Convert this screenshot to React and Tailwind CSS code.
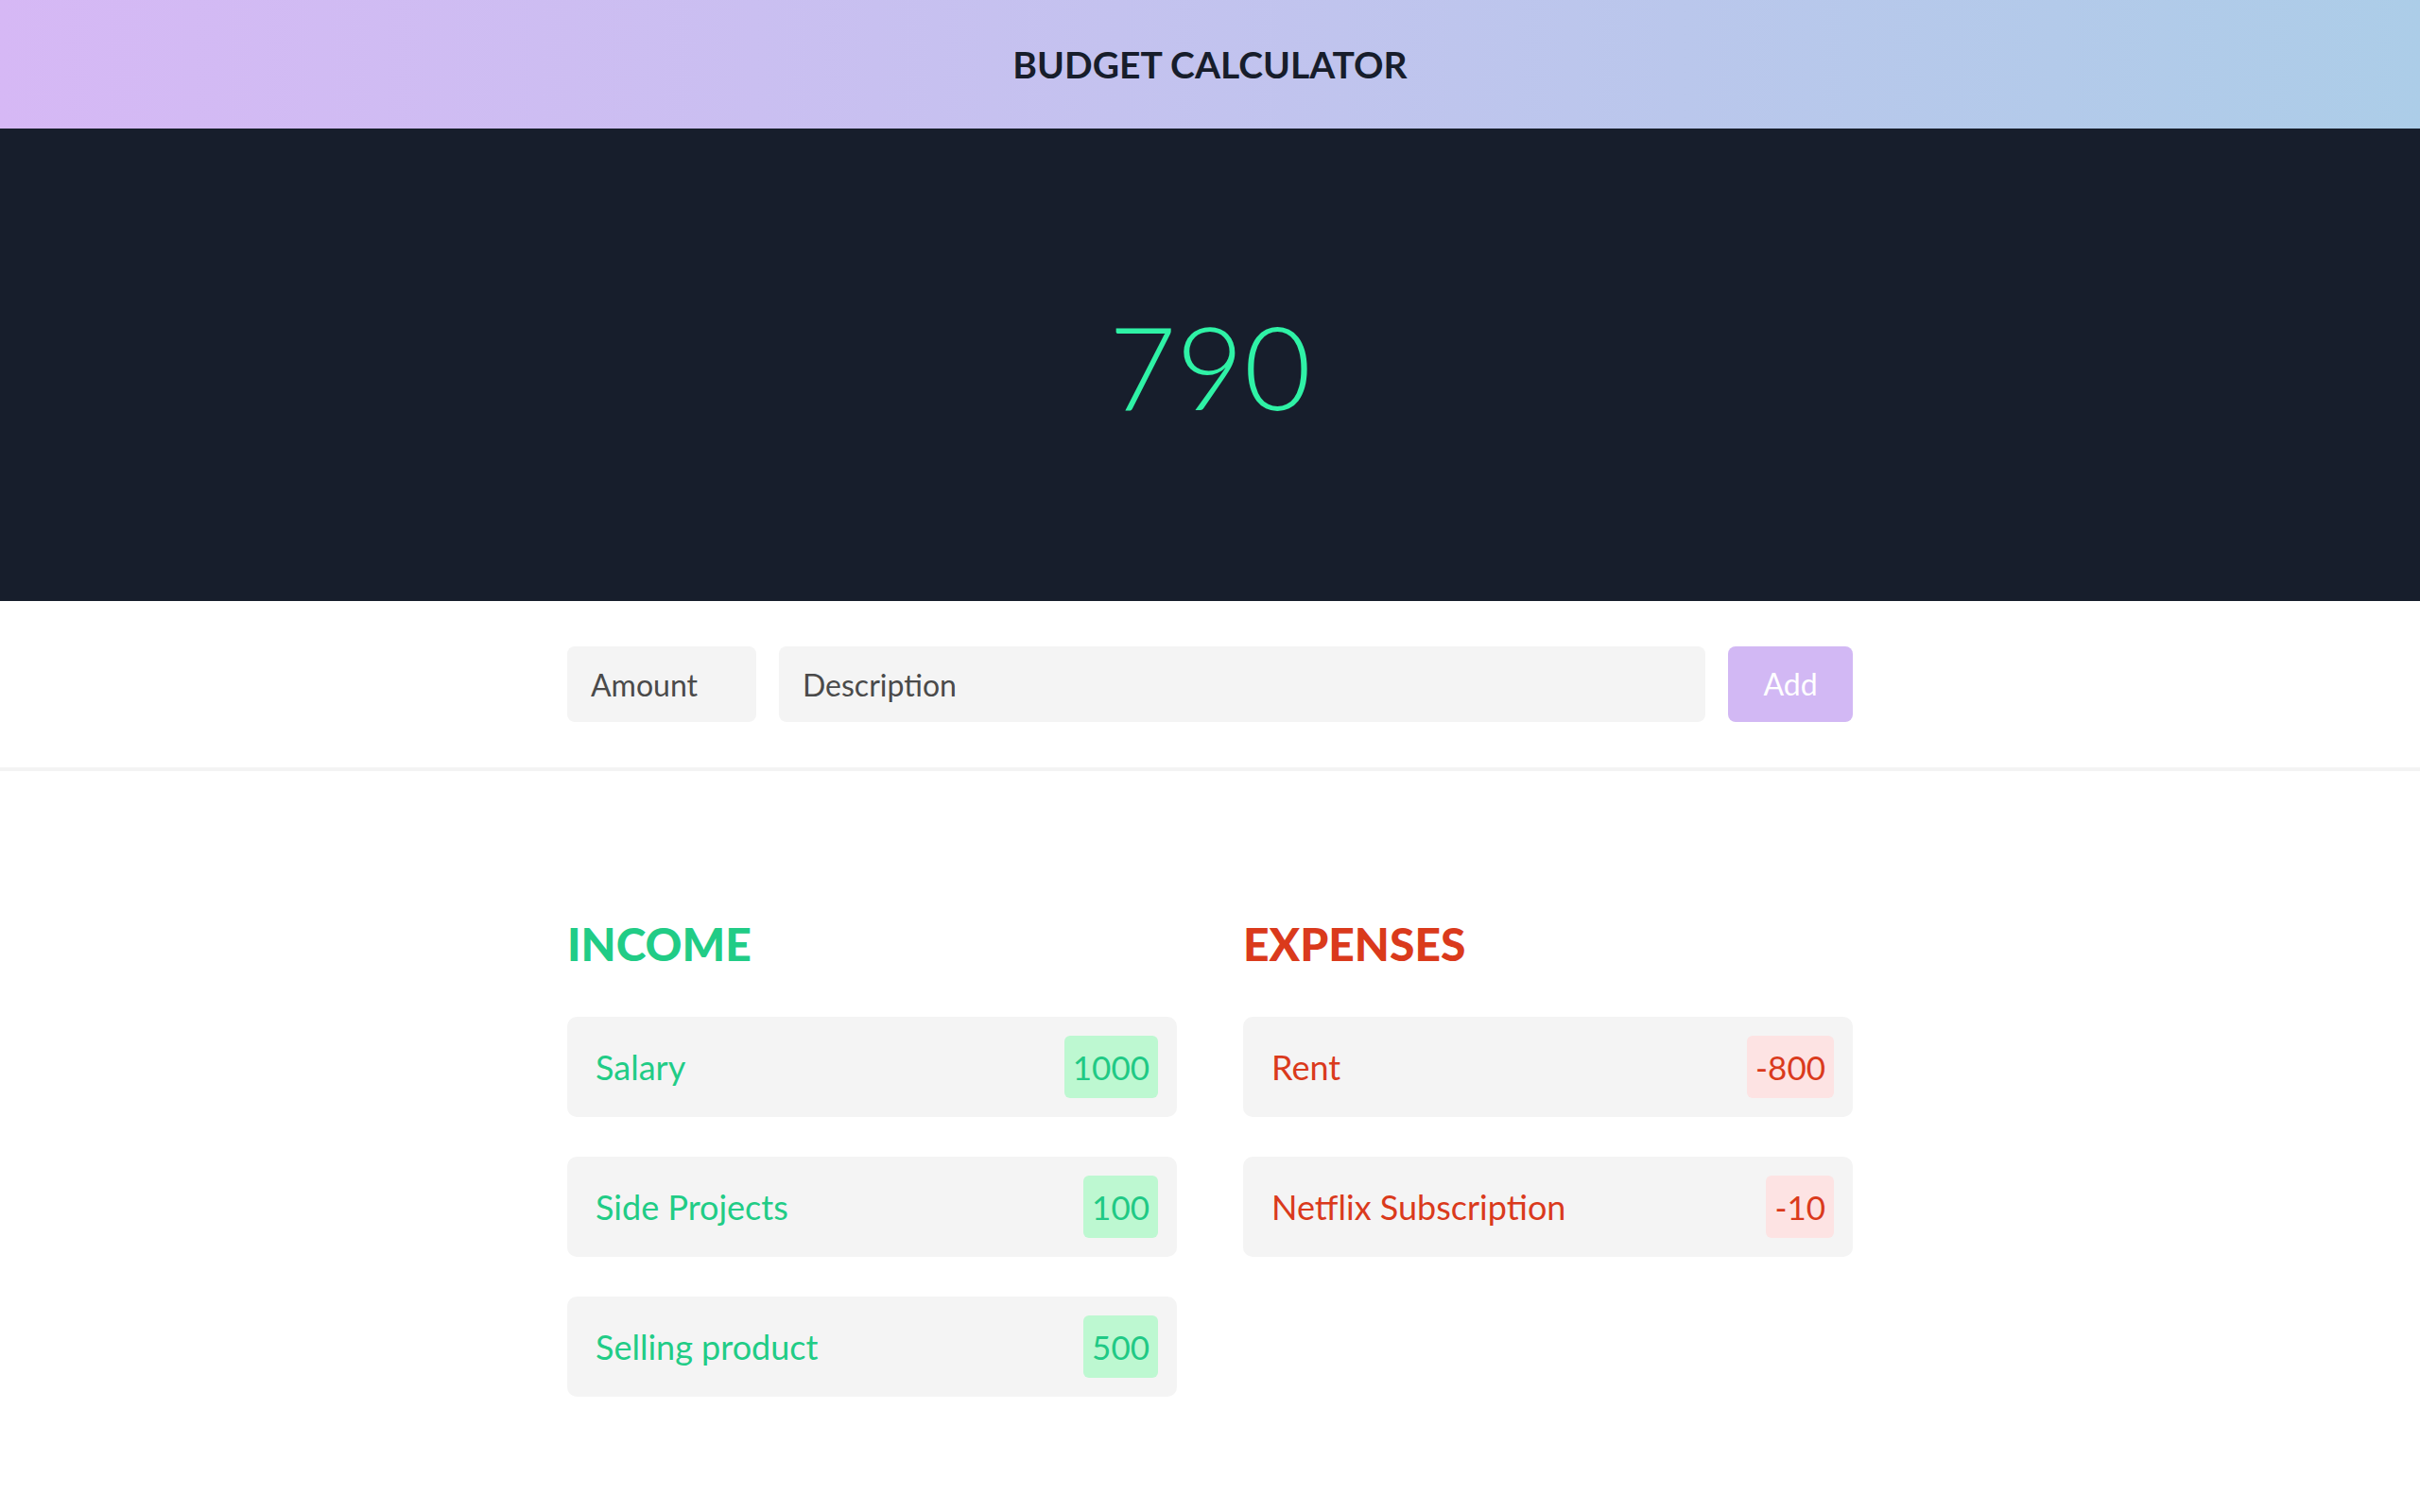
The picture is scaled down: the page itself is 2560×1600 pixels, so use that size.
import React from "react";

const income = [
  { label: "Salary", value: "1000" },
  { label: "Side Projects", value: "100" },
  { label: "Selling product", value: "500" },
];
const expenses = [
  { label: "Rent", value: "-800" },
  { label: "Netflix Subscription", value: "-10" },
];

function Row({ label, value, type }) {
  const inc = type === "income";
  return (
    <div className="flex items-center justify-between bg-[#f4f4f4] rounded-[10px] pl-[30px] pr-[20px] py-[20px]">
      <span className={inc ? "text-[36px] leading-[54px] text-[#21cc86]" : "text-[36px] leading-[54px] text-[#da3a1c]"}>
        {label}
      </span>
      <span
        className={
          inc
            ? "text-[35px] leading-[54px] px-[9px] py-[6px] rounded-[6px] bg-[#bdf8d1] text-[#21c985]"
            : "text-[35px] leading-[54px] px-[9px] py-[6px] rounded-[6px] bg-[#fde3e3] text-[#da3a1c]"
        }
      >
        {value}
      </span>
    </div>
  );
}

export default function App() {
  return (
    <div className="min-h-[1600px] bg-white font-['Lato',_'Noto_Sans',_sans-serif]">
      <header className="h-[136px] flex items-center justify-center bg-gradient-to-r from-[#d6b8f5] to-[#accde8]">
        <h1 className="text-[39px] font-bold text-[#171d2b]">BUDGET CALCULATOR</h1>
      </header>
      <section className="h-[500px] bg-[#171e2c] flex items-center justify-center">
        <div className="text-[123px] font-light leading-none text-[#2ff2a6]">790</div>
      </section>
      <div className="border-b-[4px] border-[#f3f3f3] py-[48px]">
        <div className="w-[1360px] mx-auto flex gap-[24px]">
          <input
            placeholder="Amount"
            className="w-[200px] h-[80px] bg-[#f4f4f4] rounded-[8px] px-[25px] text-[32px] text-[#4a4a4a] placeholder:text-[#4a4a4a] outline-none"
          />
          <input
            placeholder="Description"
            className="flex-1 h-[80px] bg-[#f4f4f4] rounded-[8px] px-[25px] text-[32px] text-[#4a4a4a] placeholder:text-[#4a4a4a] outline-none"
          />
          <button className="w-[132px] h-[80px] bg-[#d2b8f4] rounded-[8px] text-white text-[32px]">Add</button>
        </div>
      </div>
      <main className="w-[1360px] mx-auto pt-[154px] grid grid-cols-2 gap-[70px]">
        <div>
          <h2 className="text-[48px] font-black leading-[57px] text-[#21cc86] mb-[49px]">INCOME</h2>
          <div className="flex flex-col gap-[42px]">
            {income.map((r) => (
              <Row key={r.label} {...r} type="income" />
            ))}
          </div>
        </div>
        <div>
          <h2 className="text-[48px] font-black leading-[57px] text-[#da3a1c] mb-[49px]">EXPENSES</h2>
          <div className="flex flex-col gap-[42px]">
            {expenses.map((r) => (
              <Row key={r.label} {...r} type="expense" />
            ))}
          </div>
        </div>
      </main>
    </div>
  );
}
